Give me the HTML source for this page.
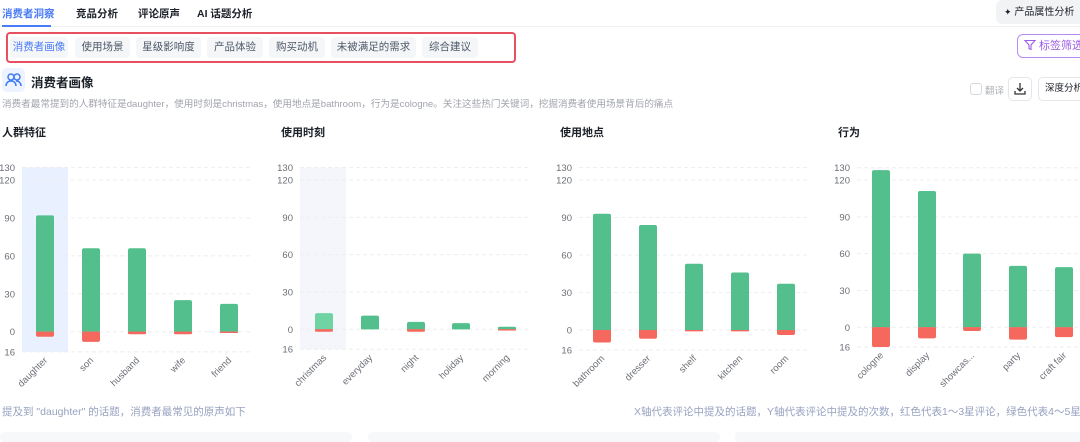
<!DOCTYPE html>
<html><head><meta charset="utf-8">
<style>
*{margin:0;padding:0;box-sizing:border-box}
body{width:1080px;height:437px;overflow:hidden;background:#fff;font-family:"Liberation Sans","Noto Sans CJK SC",sans-serif;position:relative;color:#1d2129}
.a{position:absolute;white-space:nowrap}
.tab{font-size:10.5px;font-weight:bold;top:6px;color:#1d2129}
.chip{position:absolute;top:37px;height:21px;background:#f5f6f8;border-radius:4px;font-size:10.5px;color:#4e5969;line-height:21px;text-align:center;white-space:nowrap}
</style></head><body>
<div class="a tab" style="left:2px;color:#4a7cf6">消费者洞察</div>
<div class="a tab" style="left:76px">竞品分析</div>
<div class="a tab" style="left:138px">评论原声</div>
<div class="a tab" style="left:197px">AI 话题分析</div>
<div class="a" style="left:0;top:26px;width:1080px;height:1px;background:#f0f1f3"></div>
<div class="a" style="left:2px;top:25px;width:49px;height:2px;background:#4a7cf6"></div>
<div class="a" style="left:996px;top:0;width:90px;height:24px;background:#f2f3f5;border-radius:6px;font-size:10px;line-height:24px;padding-left:8px;color:#1d2129"><span style="font-size:9px">✦</span> 产品属性分析</div>

<div class="a" style="left:6px;top:32px;width:510px;height:31px;border:2px solid #e8505f;border-radius:4px"></div>
<div class="chip" style="left:10px;width:58px;color:#4a7cf6">消费者画像</div>
<div class="chip" style="left:75px;width:55px">使用场景</div>
<div class="chip" style="left:136px;width:65px">星级影响度</div>
<div class="chip" style="left:207px;width:56px">产品体验</div>
<div class="chip" style="left:269px;width:56px">购买动机</div>
<div class="chip" style="left:331px;width:85px">未被满足的需求</div>
<div class="chip" style="left:422px;width:56px">综合建议</div>
<div class="a" style="left:1017px;top:34px;width:70px;height:24px;border:1px solid #b98cf5;border-radius:6px;font-size:11px;color:#9b5de5;line-height:22px;padding-left:6px">
<svg width="12" height="12" viewBox="0 0 12 12" style="vertical-align:-2px"><path d="M1 1.5h10L7 6v4.5L5 9.5V6z" fill="none" stroke="#9b5de5" stroke-width="1.1"/></svg> 标签筛选</div>

<div class="a" style="left:2px;top:68px;width:23px;height:24px;background:#edf3ff;border-radius:5px">
<svg width="23" height="24" viewBox="0 0 23 24"><circle cx="9" cy="9" r="3" fill="none" stroke="#3f7bf5" stroke-width="1.5"/><circle cx="15" cy="9" r="3" fill="none" stroke="#3f7bf5" stroke-width="1.5"/><path d="M4 18c0-3 2-5 5-5s5 2 5 5M14 13c3 0 5 2 5 5" fill="none" stroke="#3f7bf5" stroke-width="1.5"/></svg></div>
<div class="a" style="left:31px;top:72px;font-size:12.5px;font-weight:bold">消费者画像</div>
<div class="a" style="left:2px;top:96px;font-size:9.6px;color:#a0a4ab">消费者最常提到的人群特征是daughter，使用时刻是christmas，使用地点是bathroom，行为是cologne。关注这些热门关键词，挖掘消费者使用场景背后的痛点</div>
<div class="a" style="left:970px;top:83px;width:12px;height:12px;border:1px solid #d5d8dd;border-radius:3px"></div>
<div class="a" style="left:985px;top:83px;font-size:9.5px;color:#b0b4ba">翻译</div>
<div class="a" style="left:1008px;top:77px;width:24px;height:24px;border:1px solid #e5e6eb;border-radius:5px">
<svg width="22" height="22" viewBox="0 0 22 22"><path d="M11 5v8M8 10l3 3 3-3M6 13v3h10v-3" fill="none" stroke="#333" stroke-width="1.3"/></svg></div>
<div class="a" style="left:1038px;top:77px;width:50px;height:24px;border:1px solid #e5e6eb;border-radius:5px;font-size:9.5px;line-height:22px;padding-left:6px">深度分析</div>

<div class="a" style="left:2px;top:124px;font-size:11px;font-weight:bold">人群特征</div>
<div class="a" style="left:281px;top:124px;font-size:11px;font-weight:bold">使用时刻</div>
<div class="a" style="left:560px;top:124px;font-size:11px;font-weight:bold">使用地点</div>
<div class="a" style="left:838px;top:124px;font-size:11px;font-weight:bold">行为</div>

<svg id="ch" class="a" style="left:0;top:0" width="1080" height="437"></svg>

<div class="a" style="left:2px;top:404px;font-size:10.5px;color:#98a2c0">提及到 "daughter" 的话题，消费者最常见的原声如下</div>
<div class="a" style="left:634px;top:404px;font-size:10.5px;color:#98a2c0">X轴代表评论中提及的话题，Y轴代表评论中提及的次数，红色代表1～3星评论，绿色代表4～5星评论</div>
<div class="a" style="left:0;top:432px;width:352px;height:10px;background:#f7f8fa;border-radius:4px"></div>
<div class="a" style="left:368px;top:432px;width:352px;height:10px;background:#f7f8fa;border-radius:4px"></div>
<div class="a" style="left:735px;top:432px;width:360px;height:10px;background:#f7f8fa;border-radius:4px"></div>

<script>
var charts=[
 {lx:2,px:22,gx:250,z:331.7,s:151.7/120,band:[22,68,'#e9f0ff'],b:[36,82,128,174,220],lab:['daughter','son','husband','wife','friend'],g:[92,66,66,25,22],r:[4,8,2,2,1]},
 {lx:281,px:300,gx:530,z:329.3,s:149.3/120,band:[300,346,'#f4f6fb'],b:[315,361,407,452,498],lab:['christmas','everyday','night','holiday','morning'],g:[13,11,6,5,2],r:[2,0,2,0,1],light:0},
 {lx:560,px:579,gx:808,z:330,s:150/120,b:[593,639,685,731,777],lab:['bathroom','dresser','shelf','kitchen','room'],g:[93,84,53,46,37],r:[10,7,1,1,4]},
 {lx:838,px:857,gx:1080,z:327.3,s:147.3/120,b:[872,918,963,1009,1055],lab:['cologne','display','showcas...','party','craft fair'],g:[128,111,60,50,49],r:[16,9,3,10,8]}
];
var h='';
charts.forEach(function(c){
 if(c.band)h+='<rect x="'+c.band[0]+'" y="'+(c.z-130*c.s)+'" width="'+(c.band[1]-c.band[0])+'" height="'+(146*c.s)+'" fill="'+c.band[2]+'"/>';
 [130,120,90,60,30,0,-16].forEach(function(v){
  var y=c.z-v*c.s;
  h+='<line x1="'+c.px+'" x2="'+c.gx+'" y1="'+y+'" y2="'+y+'" stroke="#eceef1" stroke-dasharray="4 3"/>';
  h+='<text x="'+(c.px-7)+'" y="'+(y+3.5)+'" font-size="9.5" fill="#6b6f76" text-anchor="end">'+Math.abs(v)+'</text>';
 });
 c.b.forEach(function(x,i){
  var gh=c.g[i]*c.s,rh=c.r[i]*c.s;
  var gc=(c.light===i)?'#6fd3a4':'#52bf8c';
  h+='<rect x="'+x+'" y="'+(c.z-gh)+'" width="18" height="'+gh+'" rx="2" fill="'+gc+'"/>';
  h+='<rect x="'+x+'" y="'+(c.z-Math.min(2,gh))+'" width="18" height="'+Math.min(2,gh)+'" fill="'+gc+'"/>';
  if(rh>0){h+='<rect x="'+x+'" y="'+c.z+'" width="18" height="'+rh+'" rx="2" fill="#f5685e"/>';
   h+='<rect x="'+x+'" y="'+c.z+'" width="18" height="'+Math.min(2,rh)+'" fill="#f5685e"/>';}
  var tx=x+12,ty=c.z-(-16)*c.s+9;
  h+='<text transform="translate('+tx+','+ty+') rotate(-45)" font-size="9.5" fill="#6b6f76" text-anchor="end">'+c.lab[i]+'</text>';
 });
});
document.getElementById('ch').innerHTML=h;
</script>
</body></html>
